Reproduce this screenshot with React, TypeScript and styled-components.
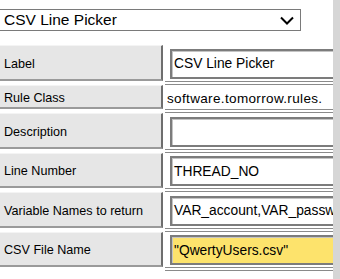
import React from 'react';
import styled, { createGlobalStyle } from 'styled-components';

const GlobalStyle = createGlobalStyle`
    html, body {
        margin: 0;
        padding: 0;
        background: #ffffff;
        font-family: "Liberation Sans", Arial, sans-serif;
        overflow: hidden;
    }
`;

// Whole page: content + the grey strip at the right edge
const Page = styled.div`
    width: 340px;
    height: 279px;
    display: flex;
`;

const Content = styled.div`
    width: 333px;
    overflow: hidden;
    padding-top: 9px;
`;

const Strip = styled.div`
    width: 7px;
    background: #d6d6d6;
`;

// Rule type dropdown
const Select = styled.div`
    width: 301px;
    height: 22px;
    box-sizing: border-box;
    border: 1px solid #7a7a7a;
    border-left: none;
    display: flex;
    align-items: center;
    justify-content: space-between;
    padding: 0 6px 0 4px;
    font-size: 15.5px;
    color: #000;
`;

const Chevron = styled.svg`
    width: 14px;
    height: 9px;
`;

// Property grid
const Grid = styled.div`
    margin-top: 14px;
    display: grid;
    grid-template-columns: 163px 1fr;
    column-gap: 2px;
`;

const LabelCell = styled.div<{ $h: number }>`
    height: ${p => p.$h}px;
    margin-bottom: 4px;
    box-sizing: border-box;
    background: #e6e6e6;
    border-top: 1px solid #f4f4f4;
    border-right: 2px solid #6e6e6e;
    border-bottom: 2px solid #9a9a9a;
    display: flex;
    align-items: center;
    padding: 2px 0 0 4px;
    font-size: 12.6px;
    color: #000;
    white-space: nowrap;
`;

const ValueCell = styled.div<{ $h: number }>`
    height: ${p => p.$h + 4}px;
    box-sizing: border-box;
    border-bottom: 4px double #8a8a8a;
    display: flex;
    align-items: center;
    padding: 1px 0 0 5px;
    overflow: hidden;
    font-size: 13.5px;
    color: #000;
    white-space: nowrap;
`;

const Field = styled.div<{ $highlight?: boolean }>`
    flex: none;
    width: 200px;
    height: 30px;
    box-sizing: border-box;
    border: 2px solid #7c7c7c;
    box-shadow: inset 1px 1px 0 #c4c4c4;
    background: ${p => (p.$highlight ? '#fde36c' : '#ffffff')};
    display: flex;
    align-items: center;
    padding-left: 2px;
    font-size: 13.8px;
    white-space: nowrap;
    overflow: hidden;
`;

const PlainValue = styled.span`
    margin-left: -3px;
    letter-spacing: 0.35px;
    padding-top: 2px;
`;

type Row = { label: string; value: string; h: number; field?: boolean; highlight?: boolean };

const rows: Row[] = [
    { label: 'Label', value: 'CSV Line Picker', h: 36, field: true },
    { label: 'Rule Class', value: 'software.tomorrow.rules.', h: 24 },
    { label: 'Description', value: '', h: 36, field: true },
    { label: 'Line Number', value: 'THREAD_NO', h: 35, field: true },
    { label: 'Variable Names to return', value: 'VAR_account,VAR_password', h: 36, field: true },
    { label: 'CSV File Name', value: '"QwertyUsers.csv"', h: 35, field: true, highlight: true },
];

export default function App() {
    return (
        <Page>
            <GlobalStyle />
            <Content>
                <Select>
                    <span>CSV Line Picker</span>
                    <Chevron viewBox="0 0 14 9">
                        <path d="M1 1.5 L7 7.5 L13 1.5" fill="none" stroke="#000" strokeWidth="2" />
                    </Chevron>
                </Select>
                <Grid>
                    {rows.map(r => (
                        <React.Fragment key={r.label}>
                            <LabelCell $h={r.h}>{r.label}</LabelCell>
                            <ValueCell $h={r.h}>
                                {r.field ? (
                                    <Field $highlight={r.highlight}>{r.value}</Field>
                                ) : (
                                    <PlainValue>{r.value}</PlainValue>
                                )}
                            </ValueCell>
                        </React.Fragment>
                    ))}
                </Grid>
            </Content>
            <Strip />
        </Page>
    );
}
